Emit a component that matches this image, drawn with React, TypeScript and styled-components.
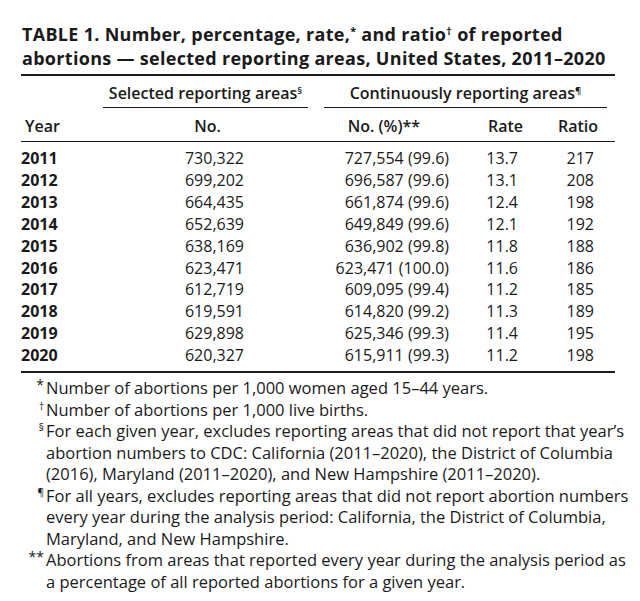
import React from "react";
import styled, { createGlobalStyle } from "styled-components";

const GlobalStyle = createGlobalStyle`
  body {
    margin: 0;
    background: #ffffff;
  }
`;

const Page = styled.div`
  width: 640px;
  box-sizing: border-box;
  padding: 22px 25px 0 21px;
  color: #1a1a1a;
  font-family: "Open Sans", "Noto Sans", sans-serif;
`;

const Title = styled.h1`
  margin: 0 0 4px 1px;
  font-size: 18px;
  line-height: 24px;
  font-weight: 700;
  letter-spacing: 0.3px;
  white-space: nowrap;
`;

const Sup = styled.sup`
  font-size: 0.6em;
  line-height: 0;
  vertical-align: 0.55em;
  font-weight: inherit;
`;

const Grid = styled.div`
  display: grid;
  grid-template-columns: 82px 205px 16px 146px 70px 75px;
  border-top: 2px solid #1c1c1c;
  border-bottom: 2px solid #1c1c1c;
  font-size: 16px;
`;

const GroupCell = styled.div<{ $col: string; $trim?: number }>`
  grid-column: ${(p) => p.$col};
  margin-right: ${(p) => p.$trim ?? 0}px;
  padding: 6px 0 3px;
  line-height: 22px;
  font-weight: 600;
  text-align: center;
  white-space: nowrap;
  border-bottom: 1.5px solid #1c1c1c;
`;

const HeadCell = styled.div<{ $col?: string; $align?: string; $pad?: string }>`
  grid-column: ${(p) => p.$col ?? "auto"};
  padding: 7px ${(p) => p.$pad ?? "0 0 4px"};
  line-height: 22px;
  font-weight: 600;
  text-align: ${(p) => p.$align ?? "left"};
  white-space: nowrap;
  border-bottom: 1.5px solid #1c1c1c;
`;

const Cell = styled.div<{ $col?: string; $align?: string; $padR?: number; $bold?: boolean; $first?: boolean; $last?: boolean }>`
  grid-column: ${(p) => p.$col ?? "auto"};
  padding-right: ${(p) => p.$padR ?? 0}px;
  padding-top: ${(p) => (p.$first ? 6 : 0)}px;
  padding-bottom: ${(p) => (p.$last ? 4 : 0)}px;
  line-height: 21.9px;
  font-weight: ${(p) => (p.$bold ? 700 : 400)};
  text-align: ${(p) => p.$align ?? "right"};
  white-space: nowrap;
`;

const Notes = styled.div`
  margin-top: 4px;
  font-size: 16.5px;
  line-height: 21.5px;
`;

const Note = styled.div`
  display: grid;
  grid-template-columns: 23px 1fr;
  column-gap: 2px;
  white-space: nowrap;
`;

const Marker = styled.span<{ $small?: boolean }>`
  text-align: right;
  font-size: ${(p) => (p.$small ? "10px" : "14px")};
  line-height: 15px;
`;

type Row = [string, string, string, string, string];

const rows: Row[] = [
  ["2011", "730,322", "727,554 (99.6)", "13.7", "217"],
  ["2012", "699,202", "696,587 (99.6)", "13.1", "208"],
  ["2013", "664,435", "661,874 (99.6)", "12.4", "198"],
  ["2014", "652,639", "649,849 (99.6)", "12.1", "192"],
  ["2015", "638,169", "636,902 (99.8)", "11.8", "188"],
  ["2016", "623,471", "623,471 (100.0)", "11.6", "186"],
  ["2017", "612,719", "609,095 (99.4)", "11.2", "185"],
  ["2018", "619,591", "614,820 (99.2)", "11.3", "189"],
  ["2019", "629,898", "625,346 (99.3)", "11.4", "195"],
  ["2020", "620,327", "615,911 (99.3)", "11.2", "198"],
];

const notes: { mark: string; small?: boolean; lines: string[] }[] = [
  { mark: "*", lines: ["Number of abortions per 1,000 women aged 15–44 years."] },
  { mark: "†", small: true, lines: ["Number of abortions per 1,000 live births."] },
  {
    mark: "§",
    small: true,
    lines: [
      "For each given year, excludes reporting areas that did not report that year’s",
      "abortion numbers to CDC: California (2011–2020), the District of Columbia",
      "(2016), Maryland (2011–2020), and New Hampshire (2011–2020).",
    ],
  },
  {
    mark: "¶",
    small: true,
    lines: [
      "For all years, excludes reporting areas that did not report abortion numbers",
      "every year during the analysis period: California, the District of Columbia,",
      "Maryland, and New Hampshire.",
    ],
  },
  {
    mark: "**",
    lines: [
      "Abortions from areas that reported every year during the analysis period as",
      "a percentage of all reported abortions for a given year.",
    ],
  },
];

const App = () => {
  return (
    <Page>
      <GlobalStyle />
      <Title>
        TABLE 1. Number, percentage, rate,<Sup>*</Sup> and ratio<Sup>†</Sup> of reported
        <br />
        abortions — selected reporting areas, United States, 2011–2020
      </Title>
      <Grid>
        <GroupCell $col="2 / 3">
          Selected reporting areas<Sup>§</Sup>
        </GroupCell>
        <GroupCell $col="4 / 7" $trim={8}>
          Continuously reporting areas<Sup>¶</Sup>
        </GroupCell>

        <HeadCell $col="1 / 2">Year</HeadCell>
        <HeadCell $col="2 / 3" $align="center">No.</HeadCell>
        <HeadCell $col="3 / 4" />
        <HeadCell $col="4 / 5" $align="right" $pad="50px 4px 0">No. (%)**</HeadCell>
        <HeadCell $col="5 / 6" $pad="0 4px 18px">Rate</HeadCell>
        <HeadCell $col="6 / 7" $align="right" $pad="17px 4px 0">Ratio</HeadCell>

        {rows.map((r, i) => {
          const first = i === 0;
          const last = i === rows.length - 1;
          return (
            <React.Fragment key={r[0]}>
              <Cell $col="1 / 2" $align="left" $bold $first={first} $last={last}>{r[0]}</Cell>
              <Cell $col="2 / 3" $padR={64} $first={first} $last={last}>{r[1]}</Cell>
              <Cell $col="4 / 5" $padR={21} $first={first} $last={last}>{r[2]}</Cell>
              <Cell $col="5 / 6" $padR={22} $first={first} $last={last}>{r[3]}</Cell>
              <Cell $col="6 / 7" $padR={21} $first={first} $last={last}>{r[4]}</Cell>
            </React.Fragment>
          );
        })}
      </Grid>
      <Notes>
        {notes.map((n) => (
          <Note key={n.mark}>
            <Marker $small={n.small}>{n.mark}</Marker>
            <span>
              {n.lines.map((l, j) => (
                <React.Fragment key={j}>
                  {j > 0 && <br />}
                  {l}
                </React.Fragment>
              ))}
            </span>
          </Note>
        ))}
      </Notes>
    </Page>
  );
};

export default App;
